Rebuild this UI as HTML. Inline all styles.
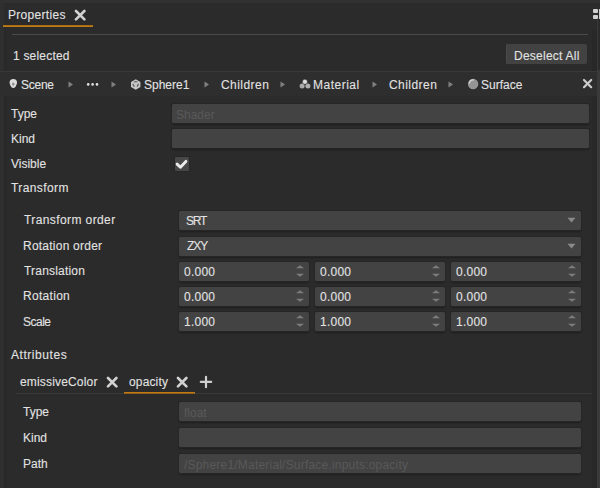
<!DOCTYPE html>
<html><head><meta charset="utf-8">
<style>
*{box-sizing:border-box;margin:0;padding:0}
html,body{width:600px;height:488px;overflow:hidden;background:#2b2b2b}
body{position:relative;font-family:"Liberation Sans",sans-serif;font-size:12px;color:#e2e2e2;-webkit-text-stroke:0.1px currentColor}
.a{position:absolute}
.t{position:absolute;line-height:14px;white-space:nowrap}
.ln{position:absolute;height:1px;background:#444}
.inp{position:absolute;background:#434343;border-radius:1.5px;box-shadow:0 0 0 1px #262626,0 2px 2px rgba(0,0,0,0.3)}
.ph{color:#595959;-webkit-text-stroke:0}
</style></head><body>
<div class="a" style="left:0;top:0;width:600px;height:3px;background:#313131"></div>
<div class="a" style="left:0;top:0;width:4px;height:488px;background:#2f2f2f"></div>
<div class="a" style="left:4px;top:30px;width:3px;height:458px;background:#292929"></div>
<div class="a" style="left:592px;top:30px;width:5px;height:458px;background:#282828"></div>
<div class="a" style="left:597px;top:20px;width:1px;height:50px;background:#383838"></div>
<div class="a" style="left:597px;top:70px;width:3px;height:418px;background:#3a3a3a"></div>
<div class="t" style="left:8px;top:8px;letter-spacing:0.3px">Properties</div>
<svg class="a" style="left:73.8px;top:8.8px" width="12.4" height="12.4" viewBox="0 0 12.4 12.4"><path d="M2 2L10.4 10.4M10.4 2L2 10.4" stroke="#d2d2d2" stroke-width="2.6" stroke-linecap="round"/></svg>
<div class="a" style="left:3px;top:25px;width:90px;height:1px;background:#a86c14"></div>
<div class="a" style="left:3px;top:26px;width:90px;height:1px;background:#c27a12"></div>
<div class="a" style="left:593px;top:8.5px;width:4.6px;height:4.6px;background:#d0d0d0;border-radius:1px"></div>
<div class="a" style="left:593px;top:14.6px;width:4.6px;height:4.6px;background:#d0d0d0;border-radius:1px"></div>
<div class="a" style="left:599px;top:8.5px;width:3px;height:10.7px;background:#d0d0d0"></div>
<div class="ln" style="left:12px;top:34px;width:576px;background:#4a4a4a"></div>
<div class="t" style="left:13px;top:49px;letter-spacing:0.2px">1 selected</div>
<div class="a" style="left:505.5px;top:43.6px;width:81.5px;height:20.8px;background:#424242;border-radius:2px;box-shadow:inset 1px 0 0 #4a4a4a"></div>
<div class="t" style="left:514px;top:49px;letter-spacing:0.25px">Deselect All</div>
<div class="a" style="left:0;top:71px;width:597px;height:25px;background:#2e2e2e"></div>
<div class="a" style="left:0;top:71px;width:597px;height:1px;background:#393939"></div>
<svg class="a" style="left:9px;top:78px" width="9" height="11" viewBox="0 0 9 11"><circle cx="4.3" cy="4.6" r="3.7" fill="#dcdcdc"/><path d="M1.2 6.2Q1.8 9.9 4.3 9.9Q6.8 9.9 7.4 6.2Z" fill="#dcdcdc"/><ellipse cx="4.3" cy="6.1" rx="1.2" ry="1.7" fill="#8a8a8a"/></svg>
<div class="t" style="left:21px;top:78px;letter-spacing:-0.25px">Scene</div>
<svg class="a" style="left:68px;top:81px" width="6" height="7" viewBox="0 0 6 7"><path d="M0.5 0.5L5 3.5L0.5 6.5Z" fill="#808080"/></svg>
<svg class="a" style="left:85px;top:82px" width="15" height="5" viewBox="0 0 15 5"><circle cx="3.2" cy="2.4" r="1.3" fill="#e2e2e2"/><circle cx="7.6" cy="2.4" r="1.3" fill="#e2e2e2"/><circle cx="12" cy="2.4" r="1.3" fill="#e2e2e2"/></svg>
<svg class="a" style="left:111px;top:81px" width="6" height="7" viewBox="0 0 6 7"><path d="M0.5 0.5L5 3.5L0.5 6.5Z" fill="#808080"/></svg>
<svg class="a" style="left:131px;top:79px" width="10" height="11" viewBox="0 0 10 11"><path d="M4.7 0.2L9.4 2.9V8.1L4.7 10.8L0 8.1V2.9Z" fill="#c8c8c8"/><ellipse cx="4.7" cy="2.7" rx="2" ry="0.8" fill="#6a6a6a"/><ellipse cx="2.6" cy="6.3" rx="0.8" ry="1.9" fill="#6a6a6a" transform="rotate(-25 2.6 6.3)"/><ellipse cx="6.8" cy="6.3" rx="0.8" ry="1.9" fill="#6a6a6a" transform="rotate(25 6.8 6.3)"/></svg>
<div class="t" style="left:144px;top:78px;">Sphere1</div>
<svg class="a" style="left:204px;top:81px" width="6" height="7" viewBox="0 0 6 7"><path d="M0.5 0.5L5 3.5L0.5 6.5Z" fill="#808080"/></svg>
<div class="t" style="left:221px;top:78px;letter-spacing:0.45px">Children</div>
<svg class="a" style="left:280px;top:81px" width="6" height="7" viewBox="0 0 6 7"><path d="M0.5 0.5L5 3.5L0.5 6.5Z" fill="#808080"/></svg>
<svg class="a" style="left:299px;top:79px" width="12" height="10" viewBox="0 0 12 10"><circle cx="3.1" cy="6.9" r="2.5" fill="#ababab"/><circle cx="8.9" cy="6.9" r="2.5" fill="#b0b0b0"/><circle cx="5.9" cy="2.8" r="2.5" fill="#dedede" stroke="#2e2e2e" stroke-width="0.5"/></svg>
<div class="t" style="left:313px;top:78px;letter-spacing:0.5px">Material</div>
<svg class="a" style="left:372px;top:81px" width="6" height="7" viewBox="0 0 6 7"><path d="M0.5 0.5L5 3.5L0.5 6.5Z" fill="#808080"/></svg>
<div class="t" style="left:389px;top:78px;letter-spacing:0.45px">Children</div>
<svg class="a" style="left:448px;top:81px" width="6" height="7" viewBox="0 0 6 7"><path d="M0.5 0.5L5 3.5L0.5 6.5Z" fill="#808080"/></svg>
<svg class="a" style="left:467px;top:78px" width="12" height="12" viewBox="0 0 12 12"><circle cx="6.1" cy="6" r="5.2" fill="#959595"/><path d="M2.4 5.2A3.9 3.9 0 0 1 6.4 1.8" stroke="#d4d4d4" stroke-width="1.3" fill="none" stroke-linecap="round"/></svg>
<div class="t" style="left:481px;top:78px;">Surface</div>
<svg class="a" style="left:581.6px;top:78.4px" width="11.2" height="11.2" viewBox="0 0 11.2 11.2"><path d="M2 2L9.2 9.2M9.2 2L2 9.2" stroke="#cccccc" stroke-width="2.2" stroke-linecap="round"/></svg>
<div class="t" style="left:11px;top:107px;">Type</div>
<div class="inp" style="left:172px;top:104px;width:417px;height:19px;background:#434343"></div>
<div class="t ph" style="left:176px;top:108px;">Shader</div>
<div class="t" style="left:11px;top:132px;">Kind</div>
<div class="inp" style="left:172px;top:129px;width:417px;height:19px;background:#434343"></div>
<div class="t" style="left:11px;top:157px;">Visible</div>
<div class="a" style="left:175px;top:157px;width:13.6px;height:13.6px;background:#474747;border-radius:1px;box-shadow:0 0 0 1px #262626"></div>
<svg class="a" style="left:175px;top:157px" width="14" height="14" viewBox="0 0 14 14"><path d="M2.1 7.1L5.4 10.2L10.9 4.4" stroke="#ececec" stroke-width="2.9" stroke-linecap="round" stroke-linejoin="round" fill="none"/></svg>
<div class="t" style="left:11px;top:181px;letter-spacing:0.4px">Transform</div>
<div class="t" style="left:24px;top:213px;letter-spacing:0.4px">Transform order</div>
<div class="inp" style="left:179px;top:211px;width:402px;height:19px;background:#434343"></div>
<div class="t" style="left:186px;top:214px;letter-spacing:-1.2px">SRT</div>
<svg class="a" style="left:567px;top:217px" width="9" height="6" viewBox="0 0 9 6"><path d="M0.5 0.8H8.5L4.5 5.4Z" fill="#8a8a8a"/></svg>
<div class="t" style="left:23px;top:239px;letter-spacing:0.23px">Rotation order</div>
<div class="inp" style="left:179px;top:237px;width:402px;height:19px;background:#434343"></div>
<div class="t" style="left:187px;top:239px;letter-spacing:-1px">ZXY</div>
<svg class="a" style="left:567px;top:243px" width="9" height="6" viewBox="0 0 9 6"><path d="M0.5 0.8H8.5L4.5 5.4Z" fill="#8a8a8a"/></svg>
<div class="t" style="left:24px;top:264px;letter-spacing:0.2px">Translation</div>
<div class="t" style="left:23px;top:289px;letter-spacing:0.3px">Rotation</div>
<div class="t" style="left:23px;top:315px;letter-spacing:-0.5px">Scale</div>
<div class="inp" style="left:179px;top:262px;width:130px;height:19px;background:#434343"></div>
<div class="t" style="left:184px;top:265px;letter-spacing:0.25px">0.000</div>
<svg class="a" style="left:295px;top:264px" width="10" height="16" viewBox="0 0 10 16"><path d="M1 4.3L5 1.2L9 4.3Z" fill="#7c7c7c"/><path d="M1 9.7L5 12.8L9 9.7Z" fill="#7c7c7c"/></svg>
<div class="inp" style="left:315px;top:262px;width:130px;height:19px;background:#434343"></div>
<div class="t" style="left:320px;top:265px;letter-spacing:0.25px">0.000</div>
<svg class="a" style="left:431px;top:264px" width="10" height="16" viewBox="0 0 10 16"><path d="M1 4.3L5 1.2L9 4.3Z" fill="#7c7c7c"/><path d="M1 9.7L5 12.8L9 9.7Z" fill="#7c7c7c"/></svg>
<div class="inp" style="left:451px;top:262px;width:130px;height:19px;background:#434343"></div>
<div class="t" style="left:456px;top:265px;letter-spacing:0.25px">0.000</div>
<svg class="a" style="left:567px;top:264px" width="10" height="16" viewBox="0 0 10 16"><path d="M1 4.3L5 1.2L9 4.3Z" fill="#7c7c7c"/><path d="M1 9.7L5 12.8L9 9.7Z" fill="#7c7c7c"/></svg>
<div class="inp" style="left:179px;top:287px;width:130px;height:19px;background:#434343"></div>
<div class="t" style="left:184px;top:290px;letter-spacing:0.25px">0.000</div>
<svg class="a" style="left:295px;top:289px" width="10" height="16" viewBox="0 0 10 16"><path d="M1 4.3L5 1.2L9 4.3Z" fill="#7c7c7c"/><path d="M1 9.7L5 12.8L9 9.7Z" fill="#7c7c7c"/></svg>
<div class="inp" style="left:315px;top:287px;width:130px;height:19px;background:#434343"></div>
<div class="t" style="left:320px;top:290px;letter-spacing:0.25px">0.000</div>
<svg class="a" style="left:431px;top:289px" width="10" height="16" viewBox="0 0 10 16"><path d="M1 4.3L5 1.2L9 4.3Z" fill="#7c7c7c"/><path d="M1 9.7L5 12.8L9 9.7Z" fill="#7c7c7c"/></svg>
<div class="inp" style="left:451px;top:287px;width:130px;height:19px;background:#434343"></div>
<div class="t" style="left:456px;top:290px;letter-spacing:0.25px">0.000</div>
<svg class="a" style="left:567px;top:289px" width="10" height="16" viewBox="0 0 10 16"><path d="M1 4.3L5 1.2L9 4.3Z" fill="#7c7c7c"/><path d="M1 9.7L5 12.8L9 9.7Z" fill="#7c7c7c"/></svg>
<div class="inp" style="left:179px;top:312px;width:130px;height:19px;background:#434343"></div>
<div class="t" style="left:184px;top:315px;letter-spacing:0.25px">1.000</div>
<svg class="a" style="left:295px;top:314px" width="10" height="16" viewBox="0 0 10 16"><path d="M1 4.3L5 1.2L9 4.3Z" fill="#7c7c7c"/><path d="M1 9.7L5 12.8L9 9.7Z" fill="#7c7c7c"/></svg>
<div class="inp" style="left:315px;top:312px;width:130px;height:19px;background:#434343"></div>
<div class="t" style="left:320px;top:315px;letter-spacing:0.25px">1.000</div>
<svg class="a" style="left:431px;top:314px" width="10" height="16" viewBox="0 0 10 16"><path d="M1 4.3L5 1.2L9 4.3Z" fill="#7c7c7c"/><path d="M1 9.7L5 12.8L9 9.7Z" fill="#7c7c7c"/></svg>
<div class="inp" style="left:451px;top:312px;width:130px;height:19px;background:#434343"></div>
<div class="t" style="left:456px;top:315px;letter-spacing:0.25px">1.000</div>
<svg class="a" style="left:567px;top:314px" width="10" height="16" viewBox="0 0 10 16"><path d="M1 4.3L5 1.2L9 4.3Z" fill="#7c7c7c"/><path d="M1 9.7L5 12.8L9 9.7Z" fill="#7c7c7c"/></svg>
<div class="t" style="left:11px;top:348px;letter-spacing:0.55px">Attributes</div>
<div class="t" style="left:20px;top:375px;letter-spacing:0.17px">emissiveColor</div>
<svg class="a" style="left:105.6px;top:375.5px" width="12.4" height="12.4" viewBox="0 0 12.4 12.4"><path d="M2 2L10.4 10.4M10.4 2L2 10.4" stroke="#d2d2d2" stroke-width="2.6" stroke-linecap="round"/></svg>
<div class="t" style="left:129px;top:375px;letter-spacing:0.15px">opacity</div>
<svg class="a" style="left:176.20000000000002px;top:375.6px" width="12.4" height="12.4" viewBox="0 0 12.4 12.4"><path d="M2 2L10.4 10.4M10.4 2L2 10.4" stroke="#d2d2d2" stroke-width="2.6" stroke-linecap="round"/></svg>
<svg class="a" style="left:199px;top:375px" width="14" height="14" viewBox="0 0 14 14"><path d="M7 1.8V12.2M1.8 6.8H12.2" stroke="#d0d0d0" stroke-width="2.2" stroke-linecap="round"/></svg>
<div class="ln" style="left:16px;top:393px;width:576px;background:#3a3a3a"></div>
<div class="a" style="left:124px;top:392px;width:71px;height:1px;background:#c47a12"></div>
<div class="a" style="left:124px;top:393px;width:71px;height:1px;background:#8e5e1a"></div>
<div class="t" style="left:23px;top:405px;">Type</div>
<div class="inp" style="left:179px;top:402px;width:402px;height:19px;background:#434343"></div>
<div class="t ph" style="left:184px;top:406px;">float</div>
<div class="t" style="left:23px;top:431px;">Kind</div>
<div class="inp" style="left:179px;top:428px;width:402px;height:19px;background:#434343"></div>
<div class="t" style="left:23px;top:457px;">Path</div>
<div class="inp" style="left:179px;top:454px;width:402px;height:19px;background:#434343"></div>
<div class="t ph" style="left:184px;top:458px;letter-spacing:0.2px">/Sphere1/Material/Surface.inputs:opacity</div>
</body></html>
